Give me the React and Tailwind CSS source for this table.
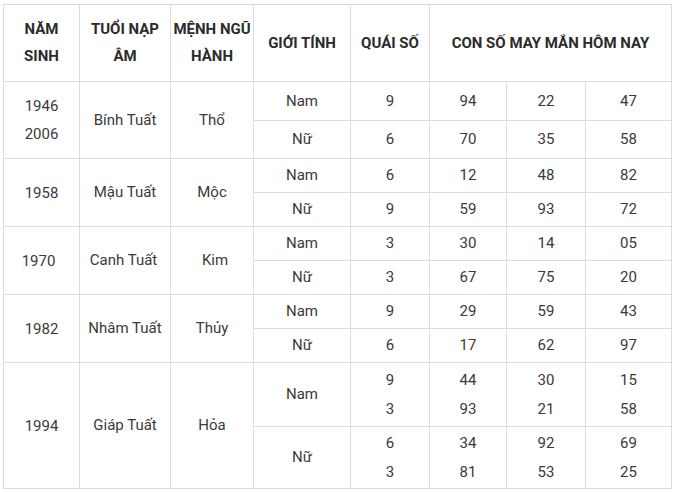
import React from "react";

const groups = [
  {
    year: ["1946", "2006"],
    tuoi: "Bính Tuất",
    menh: "Thổ",
    rows: [
      ["Nam", ["9"], ["94"], ["22"], ["47"]],
      ["Nữ", ["6"], ["70"], ["35"], ["58"]],
    ],
  },
  {
    year: ["1958"],
    tuoi: "Mậu Tuất",
    menh: "Mộc",
    rows: [
      ["Nam", ["6"], ["12"], ["48"], ["82"]],
      ["Nữ", ["9"], ["59"], ["93"], ["72"]],
    ],
  },
  {
    year: ["1970"],
    tuoi: "Canh Tuất",
    menh: "Kim",
    yearCls: "pr-[6px]",
    tuoiCls: "pr-[3px]",
    menhCls: "pl-[6px]",
    rows: [
      ["Nam", ["3"], ["30"], ["14"], ["05"]],
      ["Nữ", ["3"], ["67"], ["75"], ["20"]],
    ],
  },
  {
    year: ["1982"],
    tuoi: "Nhâm Tuất",
    menh: "Thủy",
    rows: [
      ["Nam", ["9"], ["29"], ["59"], ["43"]],
      ["Nữ", ["6"], ["17"], ["62"], ["97"]],
    ],
  },
  {
    year: ["1994"],
    tuoi: "Giáp Tuất",
    menh: "Hỏa",
    rows: [
      ["Nam", ["9", "3"], ["44", "93"], ["30", "21"], ["15", "58"]],
      ["Nữ", ["6", "3"], ["34", "81"], ["92", "53"], ["69", "25"]],
    ],
  },
];

function Cell({ children, className = "" }) {
  return (
    <div
      className={
        "bg-white flex flex-col items-center justify-center text-center " +
        className
      }
    >
      {children}
    </div>
  );
}

function Lines({ items, leading = "leading-[29px]" }) {
  return items.map((t, i) => (
    <div key={i} className={leading}>
      {t}
    </div>
  ));
}

export default function App() {
  return (
    <div
      className="min-h-screen bg-white pt-[4px] pl-[3px]"
      style={{ fontFamily: "Roboto, 'Liberation Sans', sans-serif" }}
    >
      <div className="grid w-fit gap-px p-px bg-[#dcdcdc] text-[15px] text-[#3a3a3a] grid-cols-[75px_90px_82px_96px_78px_76px_78px_85px] grid-rows-[76px_38px_37px_33px_33px_33px_33px_33px_33px_63px_61px]">
        <Cell className="font-bold text-[#2b2b2b] leading-[27px]">
          <div>NĂM</div>
          <div>SINH</div>
        </Cell>
        <Cell className="font-bold text-[#2b2b2b] leading-[27px]">
          <div>TUỔI NẠP</div>
          <div>ÂM</div>
        </Cell>
        <Cell className="font-bold text-[#2b2b2b] leading-[27px]">
          <div>MỆNH NGŨ</div>
          <div>HÀNH</div>
        </Cell>
        <Cell className="font-bold text-[#2b2b2b]">GIỚI TÍNH</Cell>
        <Cell className="font-bold text-[#2b2b2b]">QUÁI SỐ</Cell>
        <Cell className="col-span-3 font-bold text-[#2b2b2b]">
          CON SỐ MAY MẮN HÔM NAY
        </Cell>
        {groups.map((g, gi) => (
          <React.Fragment key={gi}>
            <Cell className={"row-span-2 " + (g.yearCls || "")}>
              <Lines items={g.year} leading="leading-[28px]" />
            </Cell>
            <Cell className={"row-span-2 " + (g.tuoiCls || "")}>{g.tuoi}</Cell>
            <Cell className={"row-span-2 " + (g.menhCls || "")}>{g.menh}</Cell>
            {g.rows.map((r, ri) => (
              <React.Fragment key={ri}>
                <Cell>{r[0]}</Cell>
                <Cell>
                  <Lines items={r[1]} />
                </Cell>
                <Cell>
                  <Lines items={r[2]} />
                </Cell>
                <Cell>
                  <Lines items={r[3]} />
                </Cell>
                <Cell>
                  <Lines items={r[4]} />
                </Cell>
              </React.Fragment>
            ))}
          </React.Fragment>
        ))}
      </div>
    </div>
  );
}
